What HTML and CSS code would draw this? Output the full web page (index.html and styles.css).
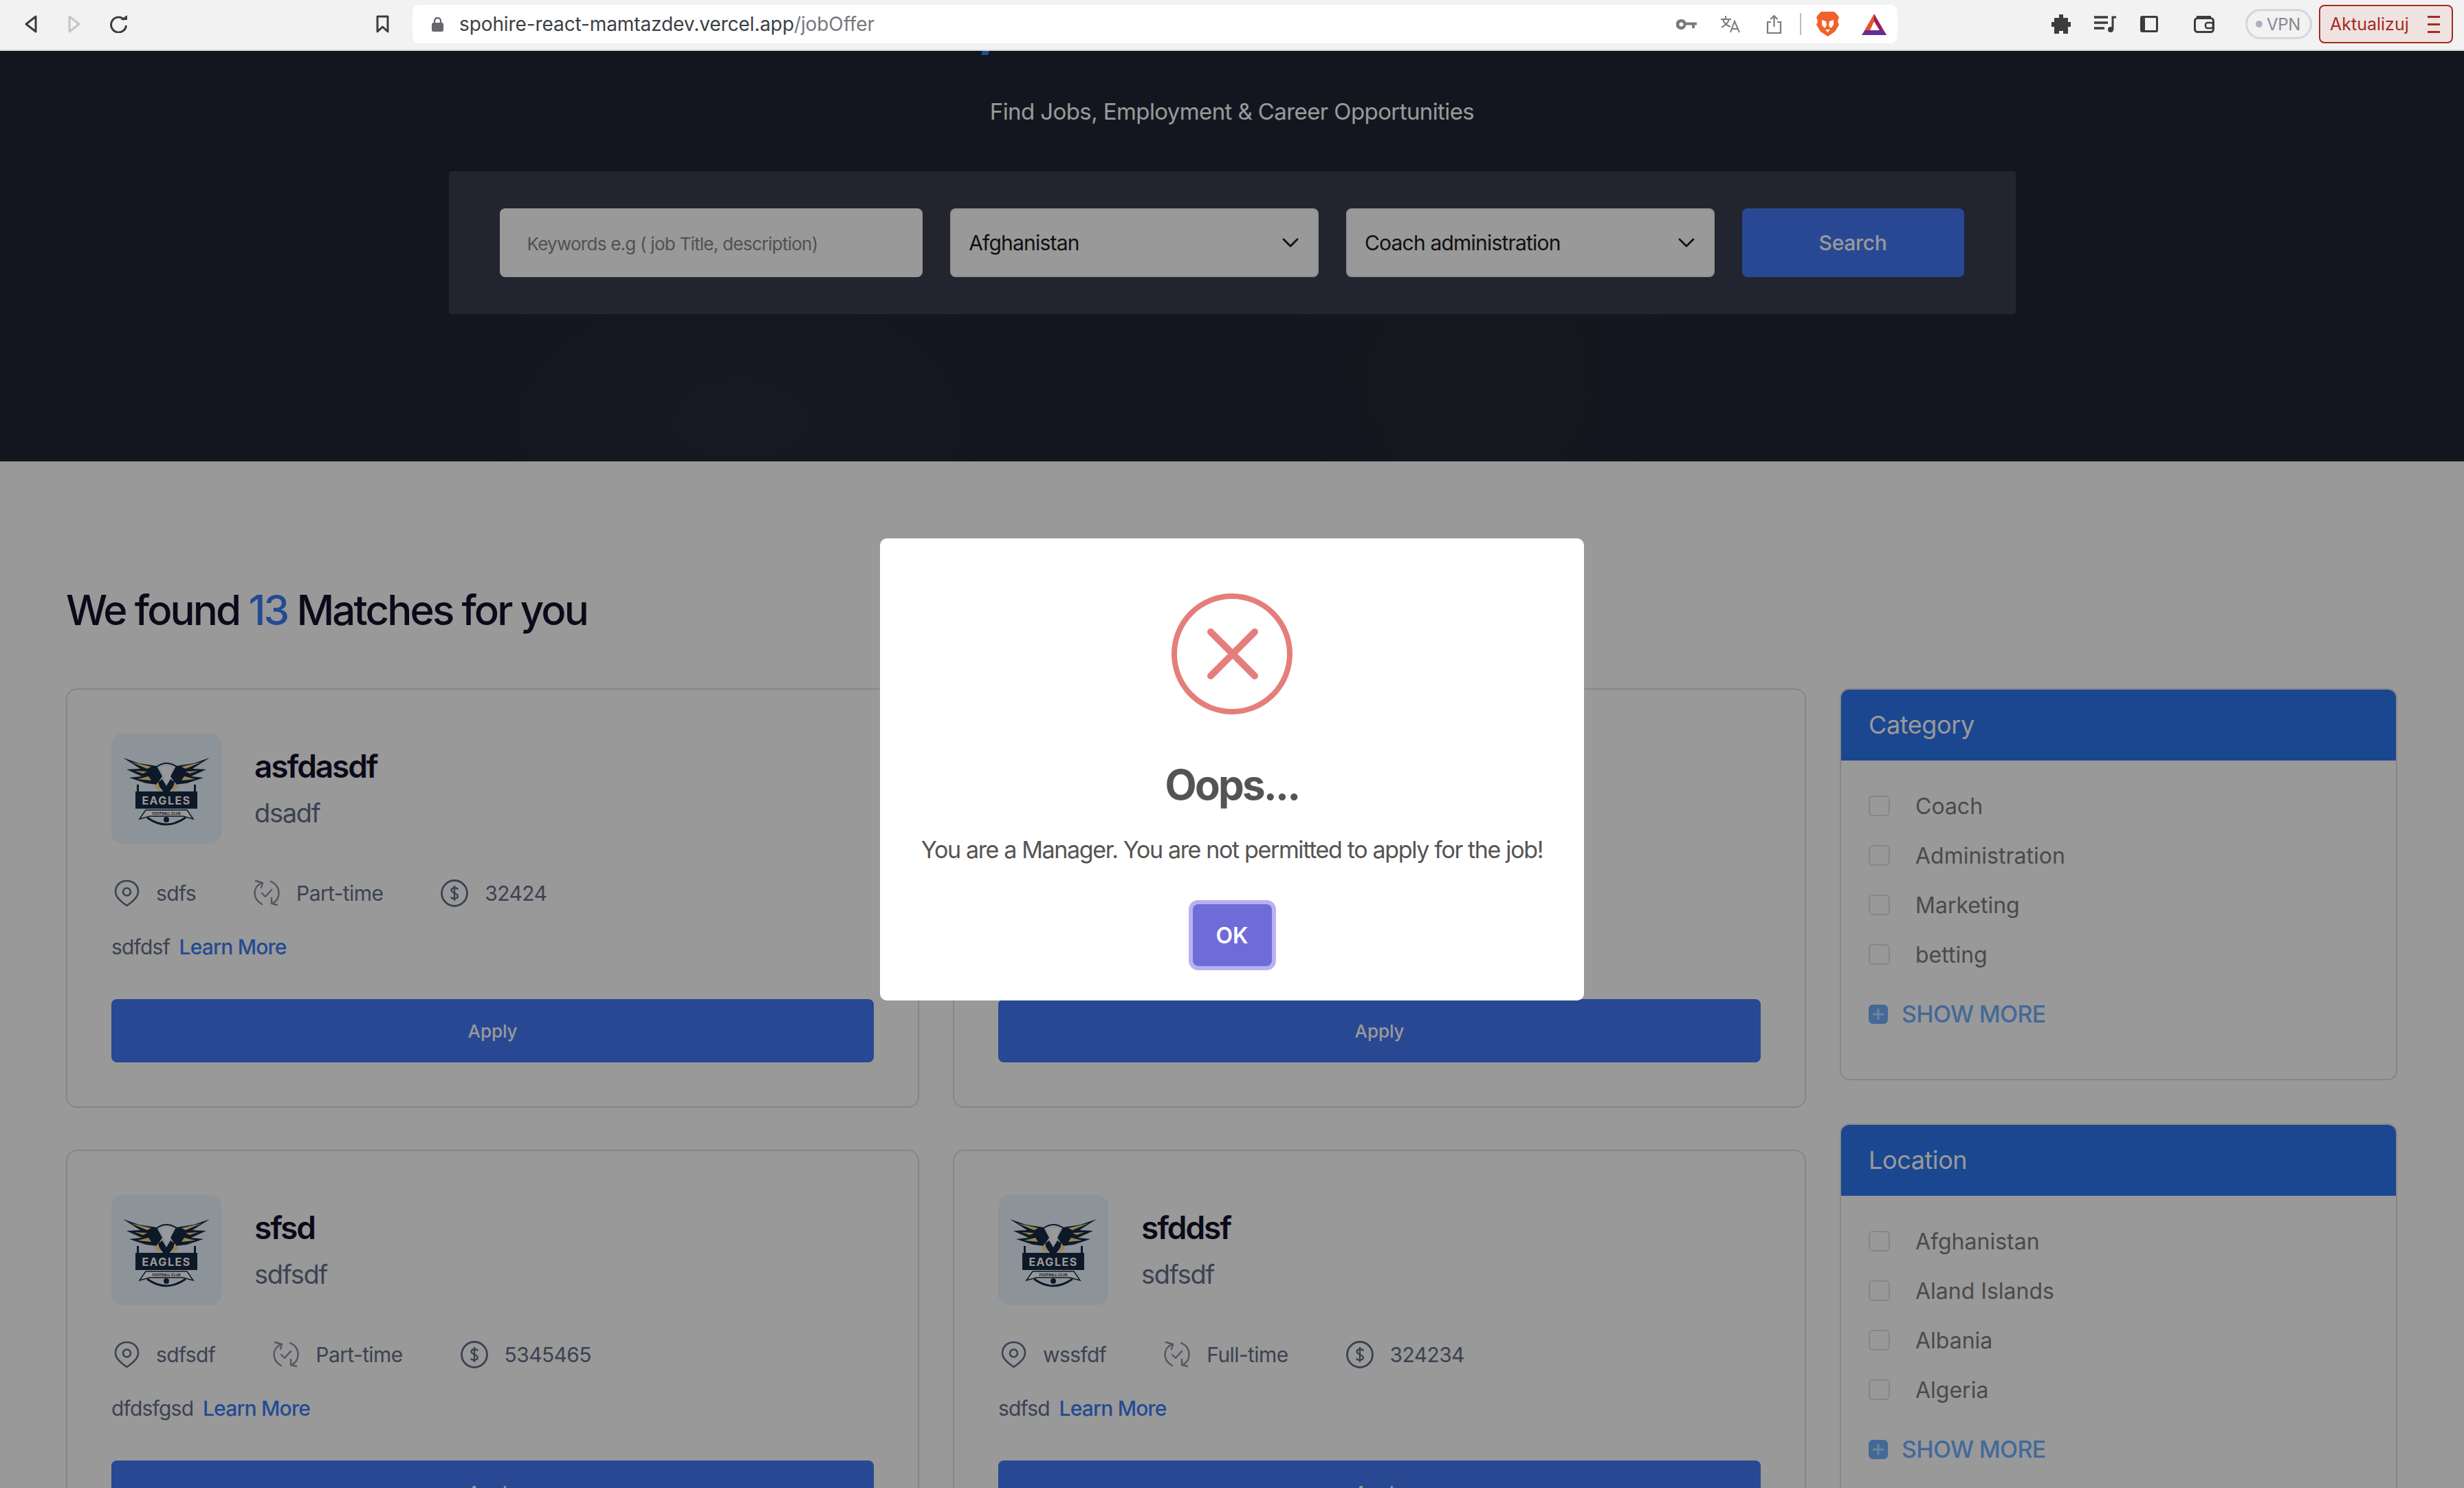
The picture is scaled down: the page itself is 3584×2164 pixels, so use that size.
FILE: index.html
```html
<!DOCTYPE html>
<html lang="en">
<head>
  <meta charset="UTF-8">
  <title>Spohire - Job Offers</title>
  <link rel="stylesheet" href="styles.css">
</head>
<body>
  <svg class="sprites" aria-hidden="true">
    <symbol id="logo" viewBox="0 0 160 160">
      <g id="wing">
        <path fill="#172b44" d="M17 35 L40 43 L66 47 L74 62 L66 74 L50 72 L26 64 L44 62 L22 52 L42 51 Z"/>
        <path fill="#ffd98f" d="M28 41 L58 48 L52 51 Z M34 54 L52 55 L46 58 Z M38 66 L54 62 L58 68 Z"/>
      </g>
      <use href="#wing" transform="matrix(-1 0 0 1 160 0)"/>
      <path fill="none" stroke="#172b44" stroke-width="2" d="M66 48 Q80 38 95 48"/>
      <path fill="#fff" d="M72 48 L88 48 L86 62 L80 72 L76 60 Z"/>
      <path fill="#172b44" d="M66 72 L80 90 L94 72 L86 66 L80 76 L74 66 Z"/>
      <path fill="#ffd98f" d="M62 78 L68 70 L72 84 Z M98 78 L92 70 L88 84 Z"/>
      <rect class="logo-post" x="37" y="74" width="3" height="14"/>
      <rect class="logo-post" x="120" y="74" width="3" height="14"/>
      <rect class="logo-post" x="35" y="84" width="90" height="25"/>
      <text class="logo-name" x="80" y="103" text-anchor="middle">EAGLES</text>
      <path fill="#fff" stroke="#172b44" stroke-width="1.500" d="M41 124 L50 111 H110 L119 124 L104 120 H56 Z"/>
      <text class="logo-club" x="80" y="118" text-anchor="middle">FOOTBALL CLUB</text>
      <path fill="none" stroke="#172b44" stroke-width="3" d="M52 122 Q80 142 108 122"/>
      <circle cx="80" cy="125" r="4" fill="#172b44"/>
    </symbol>
    <symbol id="pin" viewBox="0 0 37 40">
      <path fill="none" stroke="currentColor" stroke-width="2.600" d="M18.500 38 C11 33 2 26 2 18 C2 8 9.500 2 18.500 2 C27.500 2 35 8 35 18 C35 26 26 33 18.500 38 Z"/>
      <circle cx="18.500" cy="18" r="5.500" fill="none" stroke="currentColor" stroke-width="2.600"/>
    </symbol>
    <symbol id="cycle" viewBox="0 0 38 40">
      <g fill="none" stroke="currentColor" stroke-width="2.400" stroke-linecap="round" stroke-linejoin="round" opacity=".75">
        <path d="M12 5 C5 8 1.500 14 1.500 20 C1.500 27 5 32 12 36"/>
        <path d="M25 3 C32 6 36.500 12 36.500 20 C36.500 27 33 32 27 35"/>
        <path d="M3 2 L13 5 L11 12 M34 37 L26 35 L26 27"/>
        <path d="M12 20 L17 25 L26 15"/>
      </g>
    </symbol>
    <symbol id="dollar" viewBox="0 0 40 40">
      <circle cx="20" cy="20" r="18.500" fill="none" stroke="currentColor" stroke-width="2.800"/>
      <path fill="none" stroke="currentColor" stroke-width="2.400" d="M25 14.500 C24 11.500 16 11 15.500 15.500 C15 20 25 19.500 24.800 24.500 C24.500 29 16 28.500 15 25.500 M20 9 V31"/>
    </symbol>
    <symbol id="chevron" viewBox="0 0 26 14">
      <path fill="none" stroke="currentColor" stroke-width="2.800" stroke-linecap="round" stroke-linejoin="round" d="M3 2 L13 12 L23 2"/>
    </symbol>
    <symbol id="plus" viewBox="0 0 28 28">
      <rect width="28" height="28" rx="6" fill="currentColor"/>
      <path stroke="#fff" stroke-width="3" d="M14 6 V22 M6 14 H22" opacity=".55"/>
    </symbol>
  </svg>

  <header class="toolbar">
    <svg class="tb-icon back" width="20" height="26" viewBox="0 0 20 26"><path fill="none" stroke="#3c3c3f" stroke-width="3" stroke-linejoin="round" d="M17 2 L3 13 L17 24 Z"/></svg>
    <svg class="tb-icon forward" width="20" height="26" viewBox="0 0 20 26"><path fill="none" stroke="#c4c4c4" stroke-width="3" stroke-linejoin="round" d="M3 2 L17 13 L3 24 Z"/></svg>
    <svg class="tb-icon reload" width="27" height="26" viewBox="0 0 27 26"><path fill="none" stroke="#3c3c3f" stroke-width="3" d="M22 7 A11 11 0 1 0 24.500 15"/><path fill="#3c3c3f" d="M16 7 H26 V0 Z"/></svg>
    <svg class="tb-icon bookmark" width="19" height="26" viewBox="0 0 19 26"><path fill="none" stroke="#3c3c3f" stroke-width="3" stroke-linejoin="round" d="M2 2 H17 V24 L9.500 17 L2 24 Z"/></svg>
    <div class="urlbar">
      <svg class="lock" width="17" height="21" viewBox="0 0 17 21"><rect y="8" width="17" height="13" rx="2.500" fill="#68686c"/><path fill="none" stroke="#68686c" stroke-width="2.400" d="M4 9 V5.500 A4.500 4.500 0 0 1 13 5.500 V9"/></svg>
      <span class="url">spohire-react-mamtazdev.vercel.app<span class="url-path">/jobOffer</span></span>
      <svg class="tb-icon key" width="30" height="15" viewBox="0 0 30 15"><path fill="#7b7b7b" fill-rule="evenodd" d="M7.500 0 A7.500 7.500 0 0 1 14.500 4.500 H30 V8.500 H27 V13 H23 V8.500 H14.500 A7.500 7.500 0 1 1 7.500 0 Z M7.500 4.500 A3 3 0 1 0 7.500 10.500 A3 3 0 1 0 7.500 4.500 Z"/></svg>
      <svg class="tb-icon translate" width="28" height="26" viewBox="0 0 28 26"><path fill="none" stroke="#7b7b7b" stroke-width="2" d="M0 6 H15 M7 1 V6 M3 6 C4 11 9 15 14 17 M12 6 C11 11 6 15 1 18 M14 25 L20 9 L27 25 M16 20 H25"/></svg>
      <svg class="tb-icon share" width="23" height="29" viewBox="0 0 23 29"><path fill="none" stroke="#7b7b7b" stroke-width="2.200" d="M7 11 H2 V27 H21 V11 H16 M11.500 18 V2 M6.500 7 L11.500 2 L16.500 7"/></svg>
      <span class="url-sep"></span>
      <svg class="tb-icon brave" width="33" height="36" viewBox="0 0 33 36"><path fill="#f1622b" d="M7 0 H26 L30 4 L33 8 L31 14 L33 19 L27 29 L16.500 36 L6 29 L0 19 L2 14 L0 8 L3 4 Z"/><path fill="#fff" d="M8 12 L14 14 L15 20 L12 24 L8 19 Z M25 12 L19 14 L18 20 L21 24 L25 19 Z M13 26 H20 L16.500 30 Z"/></svg>
      <svg class="tb-icon bat" width="36" height="31" viewBox="0 0 36 31"><path fill="#e5532d" d="M18 0 L0 31 H9 L18 11 Z"/><path fill="#9a1f5a" d="M18 0 L36 31 H30 L18 11 Z"/><path fill="#662d91" d="M0 31 L5 24 H31 L36 31 Z"/></svg>
    </div>
    <svg class="tb-icon puzzle" width="28" height="28" viewBox="0 0 28 28"><path fill="#3c3c3f" d="M11 0 H17 V5 H24 V11 H28 V18 H24 V28 H17 V24 H11 V28 H4 V18 H0 V11 H4 V5 H11 Z"/></svg>
    <svg class="tb-icon playlist" width="32" height="24" viewBox="0 0 32 24"><path stroke="#3c3c3f" stroke-width="3.500" d="M0 2 H20 M0 10 H20 M0 18 H15"/><path fill="none" stroke="#3c3c3f" stroke-width="3" d="M27 20 V2 H32"/><circle cx="24" cy="20" r="4" fill="#3c3c3f"/></svg>
    <svg class="tb-icon sidebar" width="26" height="24" viewBox="0 0 26 24"><rect x="1.500" y="1.500" width="23" height="21" rx="1.500" fill="none" stroke="#3c3c3f" stroke-width="3"/><rect x="1" y="1" width="6" height="22" fill="#3c3c3f"/></svg>
    <svg class="tb-icon wallet" width="30" height="25" viewBox="0 0 30 25"><rect x="1.500" y="3.500" width="27" height="20" rx="4" fill="none" stroke="#3c3c3f" stroke-width="3"/><path stroke="#3c3c3f" stroke-width="3" d="M4 1.500 H25"/><rect x="17" y="10" width="11" height="8" rx="3" fill="none" stroke="#3c3c3f" stroke-width="2.500"/></svg>
    <div class="vpn"><span class="vpn-dot"></span>VPN</div>
    <div class="update">Aktualizuj<span class="update-bars"><i></i><i></i><i></i></span></div>
  </header>

  <section class="hero">
    <span class="hero-mark"></span>
    <p class="hero-title">Find Jobs, Employment &amp; Career Opportunities</p>
    <form class="search">
      <input class="search-input" type="text" placeholder="Keywords e.g ( job Title, description)">
      <div class="search-select">Afghanistan<svg class="chevron"><use href="#chevron"/></svg></div>
      <div class="search-select">Coach administration<svg class="chevron"><use href="#chevron"/></svg></div>
      <button class="search-btn" type="button">Search</button>
    </form>
  </section>

  <main class="content">
    <h2 class="found">We found <span class="found-num">13</span> Matches for you</h2>
    <div class="columns">
      <div class="jobs">
        <article class="job">
          <div class="job-head">
            <svg class="job-logo"><use href="#logo"/></svg>
            <div>
              <h3 class="job-title">asfdasdf</h3>
              <p class="job-org">dsadf</p>
            </div>
          </div>
          <div class="job-info">
            <span class="info"><svg class="info-pin"><use href="#pin"/></svg>sdfs</span>
            <span class="info"><svg class="info-cycle"><use href="#cycle"/></svg>Part-time</span>
            <span class="info"><svg class="info-dollar"><use href="#dollar"/></svg>32424</span>
          </div>
          <p class="job-desc">sdfdsf <a class="job-more">Learn More</a></p>
          <button class="job-apply" type="button">Apply</button>
        </article>

        <!-- the dialog covers everything on this card except its button -->
        <article class="job">
          <button class="job-apply" type="button">Apply</button>
        </article>

        <article class="job">
          <div class="job-head">
            <svg class="job-logo"><use href="#logo"/></svg>
            <div>
              <h3 class="job-title">sfsd</h3>
              <p class="job-org">sdfsdf</p>
            </div>
          </div>
          <div class="job-info">
            <span class="info"><svg class="info-pin"><use href="#pin"/></svg>sdfsdf</span>
            <span class="info"><svg class="info-cycle"><use href="#cycle"/></svg>Part-time</span>
            <span class="info"><svg class="info-dollar"><use href="#dollar"/></svg>5345465</span>
          </div>
          <p class="job-desc">dfdsfgsd <a class="job-more">Learn More</a></p>
          <button class="job-apply" type="button">Apply</button>
        </article>

        <article class="job">
          <div class="job-head">
            <svg class="job-logo"><use href="#logo"/></svg>
            <div>
              <h3 class="job-title">sfddsf</h3>
              <p class="job-org">sdfsdf</p>
            </div>
          </div>
          <div class="job-info">
            <span class="info"><svg class="info-pin"><use href="#pin"/></svg>wssfdf</span>
            <span class="info"><svg class="info-cycle"><use href="#cycle"/></svg>Full-time</span>
            <span class="info"><svg class="info-dollar"><use href="#dollar"/></svg>324234</span>
          </div>
          <p class="job-desc">sdfsd <a class="job-more">Learn More</a></p>
          <button class="job-apply" type="button">Apply</button>
        </article>
      </div>

      <aside class="filters">
        <section class="filter">
          <h4 class="filter-head">Category</h4>
          <ul class="filter-list">
            <li class="filter-item"><span class="check"></span>Coach</li>
            <li class="filter-item"><span class="check"></span>Administration</li>
            <li class="filter-item"><span class="check"></span>Marketing</li>
            <li class="filter-item"><span class="check"></span>betting</li>
          </ul>
          <a class="filter-more"><svg class="plus"><use href="#plus"/></svg>SHOW MORE</a>
        </section>
        <section class="filter">
          <h4 class="filter-head">Location</h4>
          <ul class="filter-list">
            <li class="filter-item"><span class="check"></span>Afghanistan</li>
            <li class="filter-item"><span class="check"></span>Aland Islands</li>
            <li class="filter-item"><span class="check"></span>Albania</li>
            <li class="filter-item"><span class="check"></span>Algeria</li>
          </ul>
          <a class="filter-more"><svg class="plus"><use href="#plus"/></svg>SHOW MORE</a>
        </section>
      </aside>
    </div>
  </main>

  <div class="overlay">
    <div class="modal">
      <svg class="modal-icon" width="176" height="176" viewBox="0 0 176 176">
        <circle cx="88" cy="88" r="84" fill="none" stroke="#e57e7b" stroke-width="8"/>
        <path stroke="#e57e7b" stroke-width="10" stroke-linecap="round" d="M57 56 L121 120 M121 56 L57 120"/>
      </svg>
      <h2 class="modal-title">Oops...</h2>
      <p class="modal-text">You are a Manager. You are not permitted to apply for the job!</p>
      <button class="modal-ok" type="button">OK</button>
    </div>
  </div>
</body>
</html>
```

FILE: styles.css
```css
* {
  box-sizing: border-box;
}

html, body {
  margin: 0;
  height: 2164px;
  overflow: hidden;
}

body {
  position: relative;
  font-family: Inter, "Liberation Sans", sans-serif;
  background: #fff;
  color: #12122b;
}

.sprites {
  display: none;
}

/* browser chrome */
.toolbar {
  display: flex;
  align-items: center;
  height: 74px;
  padding: 0 16px 2px 35px;
  background: #f2f2f2;
  border-bottom: 2px solid #d9dcdd;
}

.tb-icon {
  flex: none;
}

.forward { margin-left: 43px; }
.reload { margin-left: 41px; }
.bookmark { margin-left: 361px; }

.urlbar {
  display: flex;
  align-items: center;
  width: 2160px;
  height: 56px;
  margin-left: 34px;
  padding-left: 28px;
  background: #fff;
  border-radius: 10px;
}

.url {
  margin-left: 23px;
  width: 1770px;
  font-size: 28px;
  letter-spacing: -0.1px;
  color: #3c3f43;
  white-space: nowrap;
}

.url-path { color: #77797d; }

.translate { margin-left: 35px; }
.share { margin-left: 38px; }

.url-sep {
  width: 2px;
  height: 32px;
  margin-left: 26px;
  background: #bdbdbd;
}

.brave { margin-left: 22px; }
.bat { margin-left: 33px; }

.puzzle { margin-left: 224px; }
.playlist { margin-left: 34px; }
.sidebar { margin-left: 35px; }
.wallet { margin-left: 52px; }

.vpn {
  display: flex;
  align-items: center;
  gap: 6px;
  width: 97px;
  height: 44px;
  margin-left: 45px;
  padding-left: 12px;
  border: 3px solid #d5d6d9;
  border-radius: 22px;
  font-size: 24px;
  letter-spacing: -0.3px;
  color: #85888e;
}

.vpn-dot {
  width: 10px;
  height: 10px;
  border-radius: 50%;
  background: #adb0bd;
}

.update {
  display: flex;
  align-items: center;
  justify-content: space-between;
  width: 195px;
  height: 56px;
  margin-left: 10px;
  padding: 0 17px 0 14px;
  background: #efe3e1;
  border: 2px solid #a52a20;
  border-radius: 8px;
  font-size: 25px;
  color: #a52a20;
}

.update-bars {
  display: flex;
  flex-direction: column;
  gap: 8px;
}

.update-bars i {
  display: block;
  width: 18px;
  height: 3px;
  background: #a52a20;
}

/* hero */
.hero {
  position: relative;
  height: 597px;
  padding-top: 68px;
  background: #202534;
  background-image:
    radial-gradient(ellipse 500px 300px at 30% 90%, #262a3a 0, transparent 100%),
    radial-gradient(ellipse 400px 400px at 60% 80%, #272834 0, transparent 100%);
}

.hero-mark {
  position: absolute;
  top: 0;
  left: 1428px;
  width: 10px;
  height: 6px;
  background: #3a7ef4;
  transform: skewX(-15deg);
}

.hero-title {
  margin: 0;
  text-align: center;
  font-size: 33px;
  line-height: 40px;
  letter-spacing: -0.6px;
  color: #fff;
}

.search {
  display: flex;
  gap: 40px;
  width: 2279px;
  height: 208px;
  margin: 67px auto 0;
  padding: 54px 75px 54px 74px;
  background: #393f50;
  border-radius: 4px;
}

.search-input {
  width: 616px;
  height: 100px;
  padding: 3px 40px 0;
  border: 0;
  border-radius: 8px;
  background: #fff;
  font-family: inherit;
  font-size: 26px;
  letter-spacing: -0.75px;
}

.search-input::placeholder {
  color: #888;
  opacity: 1;
}

.search-select {
  display: flex;
  align-items: center;
  justify-content: space-between;
  width: 536px;
  height: 100px;
  padding: 0 26px 0 25px;
  border: 2px solid #f2f2f2;
  border-radius: 8px;
  background: #fff;
  font-size: 30px;
  letter-spacing: -0.8px;
  color: #1c1c1c;
}

.chevron {
  width: 26px;
  height: 14px;
  color: #1c1c1c;
}

.search-btn {
  width: 323px;
  height: 100px;
  border: 0;
  border-radius: 8px;
  background: #4378f6;
  color: #fff;
  font-family: inherit;
  font-size: 30px;
  letter-spacing: -0.3px;
  font-weight: 500;
}

/* listing */
.content {
  padding: 176px 97px 0 96px;
}

.found {
  margin: 0 0 74px;
  font-size: 60px;
  line-height: 80px;
  font-weight: 500;
  letter-spacing: -2.85px;
}

.found-num {
  color: #3b7cf5;
}

.columns {
  display: grid;
  grid-template-columns: 1fr 811px;
  column-gap: 49px;
  align-items: start;
}

.jobs {
  display: grid;
  grid-template-columns: 1fr 1fr;
  column-gap: 49px;
  row-gap: 61px;
}

.job {
  display: flex;
  flex-direction: column;
  height: 610px;
  padding: 64px;
  border: 2px solid #dfdfdf;
  border-radius: 16px;
}

.job-head {
  display: flex;
  align-items: center;
  gap: 48px;
}

.job-logo {
  flex: none;
  width: 160px;
  height: 160px;
  border-radius: 16px;
  background: #e9f5ff;
}

.logo-post {
  fill: #172b44;
}

.logo-name {
  font-size: 16px;
  font-weight: 700;
  letter-spacing: 1.5px;
  fill: #fff;
}

.logo-club {
  font-size: 5px;
  font-weight: 700;
  fill: #172b44;
}

.job-title {
  margin: 0;
  padding-top: 2px;
  font-size: 46px;
  line-height: 68px;
  font-weight: 600;
  letter-spacing: -2.1px;
}

.job-org {
  margin: 0;
  font-size: 38px;
  line-height: 68px;
  color: #646e89;
  letter-spacing: -1.3px;
}

.job-info {
  display: flex;
  gap: 84px;
  margin-top: 52px;
  height: 40px;
}

.info {
  display: flex;
  align-items: center;
  gap: 24px;
  font-size: 30px;
  letter-spacing: -0.6px;
  color: #646e89;
}

.info svg {
  width: 40px;
  height: 40px;
}

.info .info-pin {
  width: 37px;
  margin-left: 4px;
}

.info .info-cycle {
  width: 38px;
}

.job-desc {
  margin: 36px 0 0;
  font-size: 30px;
  line-height: 44px;
  letter-spacing: -0.8px;
  color: #646e89;
}

.job-more {
  margin-left: 6px;
  font-weight: 500;
  color: #3b7cf5;
}

.job-apply {
  display: block;
  flex: none;
  width: 100%;
  height: 92px;
  margin-top: auto;
  border: 0;
  border-radius: 8px;
  background: #4378f6;
  color: #fff;
  font-family: inherit;
  font-size: 26px;
  letter-spacing: -0.1px;
  font-weight: 500;
}

/* filters */
.filter {
  height: 570px;
  margin-bottom: 63px;
  border: 2px solid #dfdfdf;
  border-radius: 14px;
  overflow: hidden;
}

.filter-head {
  margin: 0;
  height: 103px;
  padding-left: 40px;
  background: #2d75f0;
  color: #fff;
  font-size: 36px;
  line-height: 103px;
  font-weight: 400;
  letter-spacing: -0.4px;
}

.filter-list {
  list-style: none;
  margin: 0;
  padding: 30px 40px 0;
}

.filter-item {
  display: flex;
  align-items: center;
  gap: 37px;
  height: 72px;
  font-size: 32px;
  color: #7c7c7c;
}

.check {
  width: 31px;
  height: 30px;
  border: 2px solid #dfdfdf;
  border-radius: 6px;
}

.filter-more {
  display: flex;
  align-items: center;
  gap: 20px;
  margin: 30px 40px 0;
  font-size: 34px;
  font-weight: 500;
  letter-spacing: -0.7px;
  color: #71afff;
}

.plus {
  width: 28px;
  height: 28px;
}

/* sweetalert style dialog */
.overlay {
  position: absolute;
  top: 74px;
  left: 0;
  right: 0;
  bottom: 0;
  display: flex;
  align-items: center;
  justify-content: center;
  background: rgba(0, 0, 0, .4);
}

.modal {
  display: flex;
  flex-direction: column;
  align-items: center;
  width: 1024px;
  height: 672px;
  padding-top: 80px;
  background: #fff;
  border-radius: 10px;
}

.modal-icon {
  flex: none;
}

.modal-title {
  margin: 66px 0 0;
  font-size: 60px;
  line-height: 72px;
  font-weight: 700;
  letter-spacing: -2.8px;
  color: #545454;
}

.modal-text {
  margin: 35px 0 0;
  font-size: 34px;
  line-height: 48px;
  letter-spacing: -1.35px;
  color: #545454;
}

.modal-ok {
  width: 115px;
  height: 90px;
  margin-top: 55px;
  border: 0;
  border-radius: 8px;
  background: #6f6bd9;
  box-shadow: 0 0 0 6px rgba(112, 102, 224, .5);
  color: #fff;
  font-family: inherit;
  font-size: 32px;
  font-weight: 600;
}
```
